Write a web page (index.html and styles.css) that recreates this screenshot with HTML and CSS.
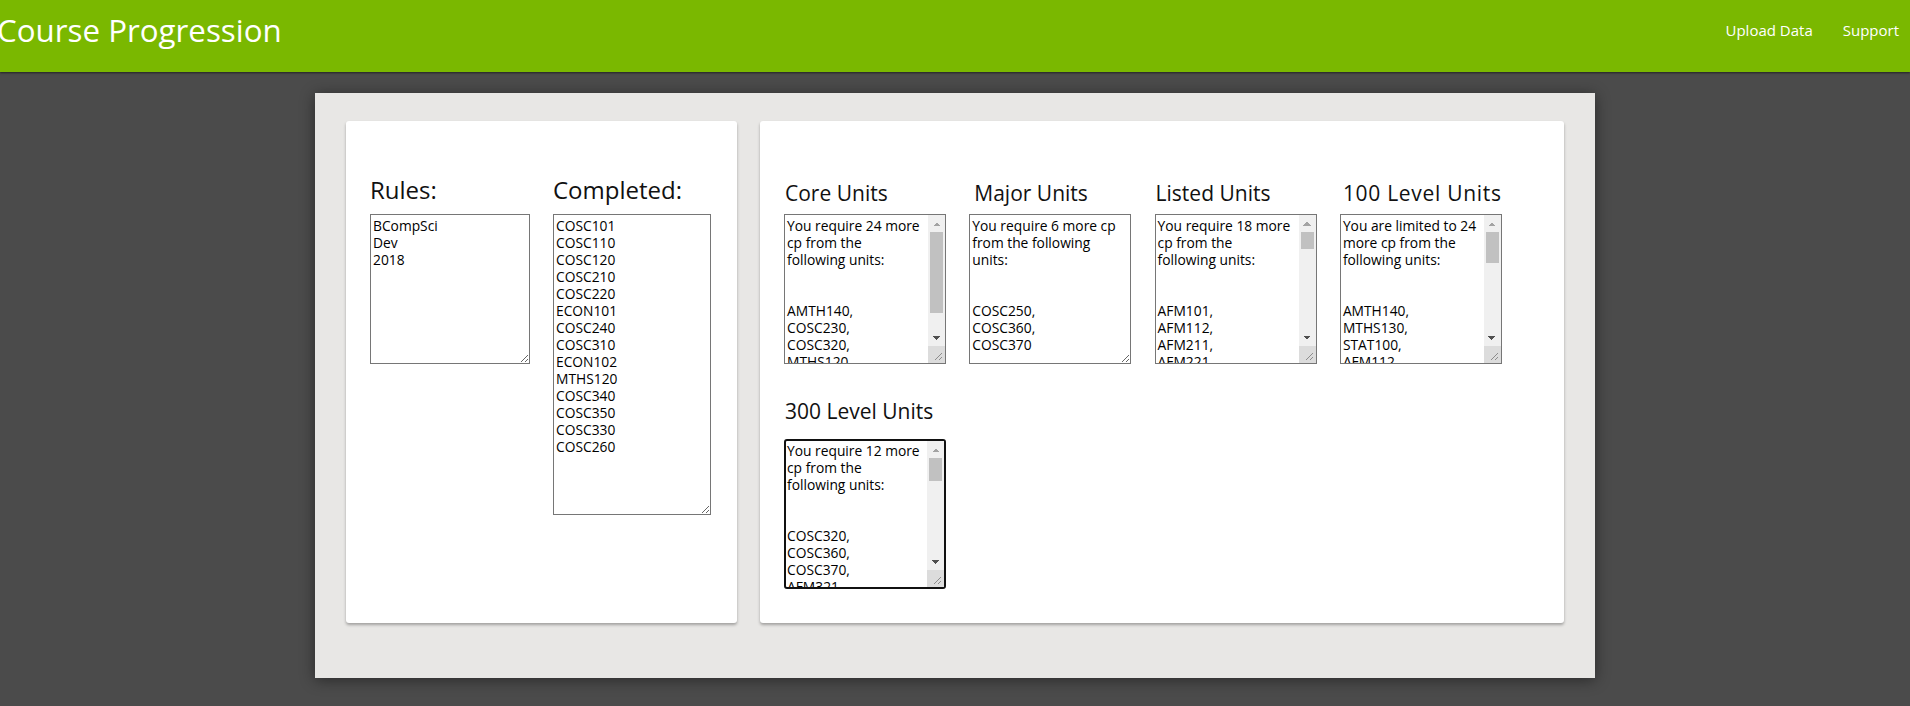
FILE: index.html
```html
<!DOCTYPE html>
<html lang="en">
<head>
<meta charset="utf-8">
<title>Course Progression</title>
<link rel="stylesheet" href="styles.css">
</head>
<body>
<header class="topbar">
  <h1 class="brand">Course Progression</h1>
  <nav class="nav">
    <a class="nav-link" href="#">Upload Data</a>
    <a class="nav-link" href="#">Support</a>
  </nav>
</header>
<main class="sheet">
  <section class="card card--input">
    <div class="field">
      <label class="field-label">Rules:</label>
      <textarea class="box box--rules" spellcheck="false">BCompSci
Dev
2018</textarea>
    </div>
    <div class="field">
      <label class="field-label">Completed:</label>
      <textarea class="box box--completed" spellcheck="false">COSC101
COSC110
COSC120
COSC210
COSC220
ECON101
COSC240
COSC310
ECON102
MTHS120
COSC340
COSC350
COSC330
COSC260</textarea>
    </div>
  </section>
  <section class="card card--units">
    <div class="unit-grid">
      <div class="unit">
        <h2 class="unit-label">Core Units</h2>
        <div class="scrollbox">
          <textarea class="box box--unit box--scroll" spellcheck="false">You require 24 more
cp from the
following units:


AMTH140,
COSC230,
COSC320,
MTHS120,
STAT100</textarea>
          <div class="vbar" aria-hidden="true">
            <span class="vbar-btn vbar-btn--up"></span>
            <span class="vbar-track"><span class="vbar-thumb" style="height:81px"></span></span>
            <span class="vbar-btn vbar-btn--down"></span>
            <span class="vbar-corner"><svg width="17" height="17" viewBox="0 0 17 17"><path d="M14 7 L7 14 M14 11 L11 14" stroke="#8c8c8c" stroke-width="1" fill="none"/></svg></span>
          </div>
        </div>
      </div>
      <div class="unit">
        <h2 class="unit-label unit-label--indent">Major Units</h2>
        <textarea class="box box--unit" spellcheck="false">You require 6 more cp
from the following
units:


COSC250,
COSC360,
COSC370</textarea>
      </div>
      <div class="unit">
        <h2 class="unit-label">Listed Units</h2>
        <div class="scrollbox">
          <textarea class="box box--unit box--scroll" spellcheck="false">You require 18 more
cp from the
following units:


AFM101,
AFM112,
AFM211,
AFM221,
AFM311,
AFM321,
AFM331,
AFM340,
AMTH140,
AMTH246,
AMTH247,
AMTH250,
COSC230,
COSC250,
COSC300,
COSC301,
COSC302,
COSC320,
COSC360,
COSC370,
COSC380,
COSC390,
ECON102,
ECON201,
ECON202,
ECON203,
ECON302,
MTHS130,
MTHS211,
MTHS212,
MTHS213,
MTHS241,
MTHS242,
MTHS311,
MTHS312,
MTHS341,
MTHS342,
STAT100,
STAT200,
STAT210,
STAT330,
STAT354,
STAT355,
STAT389</textarea>
          <div class="vbar" aria-hidden="true">
            <span class="vbar-btn vbar-btn--up"></span>
            <span class="vbar-track"><span class="vbar-thumb" style="height:17px"></span></span>
            <span class="vbar-btn vbar-btn--down"></span>
            <span class="vbar-corner"><svg width="17" height="17" viewBox="0 0 17 17"><path d="M14 7 L7 14 M14 11 L11 14" stroke="#8c8c8c" stroke-width="1" fill="none"/></svg></span>
          </div>
        </div>
      </div>
      <div class="unit">
        <h2 class="unit-label unit-label--wide">100 Level Units</h2>
        <div class="scrollbox">
          <textarea class="box box--unit box--scroll" spellcheck="false">You are limited to 24
more cp from the
following units:


AMTH140,
MTHS130,
STAT100,
AFM112,
AFM101,
COSC101,
COSC110,
COSC120,
ECON101,
ECON102,
MTHS110,
MTHS120,
MM105,
MM110,
MM120,
PSYC101,
PSYC102,
PHIL101,
PHIL102,
LING101,
STAT110,
AMTH142</textarea>
          <div class="vbar" aria-hidden="true">
            <span class="vbar-btn vbar-btn--up"></span>
            <span class="vbar-track"><span class="vbar-thumb" style="height:31px"></span></span>
            <span class="vbar-btn vbar-btn--down"></span>
            <span class="vbar-corner"><svg width="17" height="17" viewBox="0 0 17 17"><path d="M14 7 L7 14 M14 11 L11 14" stroke="#8c8c8c" stroke-width="1" fill="none"/></svg></span>
          </div>
        </div>
      </div>
      <div class="unit unit--spaced">
        <h2 class="unit-label">300 Level Units</h2>
        <div class="scrollbox scrollbox--focused">
          <textarea class="box box--unit box--scroll box--focused" spellcheck="false">You require 12 more
cp from the
following units:


COSC320,
COSC360,
COSC370,
AFM321,
AFM311,
AFM331,
AFM340,
AMTH342,
AMTH350,
COSC300,
COSC301,
COSC302,
COSC310,
COSC330,
COSC340,
COSC350,
COSC380,
COSC390,
ECON302,
ECON307,
ECON331,
MTHS311,
MTHS312,
MTHS341,
MTHS342,
STAT330,
STAT354,
STAT355</textarea>
          <div class="vbar" aria-hidden="true">
            <span class="vbar-btn vbar-btn--up"></span>
            <span class="vbar-track"><span class="vbar-thumb" style="height:23px"></span></span>
            <span class="vbar-btn vbar-btn--down"></span>
            <span class="vbar-corner"><svg width="17" height="17" viewBox="0 0 17 17"><path d="M14 7 L7 14 M14 11 L11 14" stroke="#8c8c8c" stroke-width="1" fill="none"/></svg></span>
          </div>
        </div>
      </div>
    </div>
  </section>
</main>
</body>
</html>
```

FILE: styles.css
```css
* {
  box-sizing: border-box;
}

html,
body {
  margin: 0;
  padding: 0;
}

body {
  background: #4b4b4b;
  font-family: "Open Sans", "Liberation Sans", sans-serif;
  color: #111;
  min-height: 706px;
}

.topbar {
  height: 72px;
  background: #7ab800;
  display: flex;
  justify-content: space-between;
  align-items: flex-start;
  box-shadow: 0 1px 2px rgba(0, 0, 0, 0.55);
  position: relative;
  z-index: 1;
}

.brand {
  margin: 0 0 0 -3px;
  padding-top: 10px;
  font-size: 31.3px;
  line-height: 40px;
  font-weight: 400;
  color: #ffffff;
  white-space: nowrap;
}

.nav {
  display: flex;
  gap: 30px;
  padding: 20px 11px 0 0;
}

.nav-link {
  color: #ffffff;
  text-decoration: none;
  font-size: 15px;
  line-height: 20px;
}

.sheet {
  width: 1280px;
  margin: 21px auto 0;
  background: #e8e7e5;
  padding: 28px 31px 55px;
  display: flex;
  gap: 23px;
  align-items: stretch;
  box-shadow: 0 2px 14px rgba(0, 0, 0, 0.45);
}

.card {
  background: #ffffff;
  border-radius: 3px;
  box-shadow: 0 2px 3px rgba(0, 0, 0, 0.3);
}

.card--input {
  width: 391px;
  flex: none;
  display: flex;
  gap: 23px;
  padding: 53px 24px 0;
  align-items: flex-start;
}

.field {
  display: flex;
  flex-direction: column;
}

.field-label {
  font-size: 24px;
  line-height: 32px;
  margin: 0 0 8px 0;
  color: #111;
}

.box {
  font-family: "Open Sans", "Liberation Sans", sans-serif;
  font-size: 13.8px;
  line-height: 17px;
  color: #000;
  padding: 2px;
  margin: 0;
  border: 1px solid #767676;
  border-radius: 0;
  background: #fff;
  display: block;
  overflow: auto;
}

.box--rules {
  width: 160px;
  height: 150px;
}

.box--completed {
  width: 158px;
  height: 301px;
}

.card--units {
  flex: 1;
  padding: 58px 24px 34px;
}

.unit-grid {
  display: grid;
  grid-template-columns: repeat(4, 162px);
  column-gap: 23.3px;
  row-gap: 33px;
}

.unit-label {
  margin: 0 0 7px 1px;
  font-size: 21px;
  line-height: 28px;
  font-weight: 400;
  color: #111;
  white-space: nowrap;
}

.unit-label--indent {
  margin-left: 5px;
}

.unit-label--wide {
  margin-left: 3px;
  letter-spacing: 0.7px;
}

.unit--spaced .unit-label {
  margin-bottom: 14px;
}

.box--unit {
  width: 162px;
  height: 150px;
}

.scrollbox {
  position: relative;
  width: 162px;
  height: 150px;
}

.box--scroll {
  overflow: hidden;
  padding-right: 19px;
}

.box--focused {
  border: 2px solid #111;
  border-radius: 3px;
  padding: 1px 18px 2px 1px;
  outline: none;
}

.vbar {
  position: absolute;
  top: 1px;
  right: 1px;
  bottom: 1px;
  width: 17px;
  display: flex;
  flex-direction: column;
  background: #f0f0f0;
}

.scrollbox--focused .vbar {
  top: 2px;
  right: 2px;
  bottom: 2px;
}

.vbar-btn {
  flex: none;
  height: 17px;
  background-repeat: no-repeat;
  background-size: 4px 4px, 4px 4px;
  background-position: 4.5px 6.5px, 8.5px 6.5px;
}

.vbar-btn--up {
  background-image:
    linear-gradient(to top left, #a3a3a3 50%, transparent 50%),
    linear-gradient(to top right, #a3a3a3 50%, transparent 50%);
}

.vbar-btn--down {
  background-image:
    linear-gradient(to bottom left, #505050 50%, transparent 50%),
    linear-gradient(to bottom right, #505050 50%, transparent 50%);
}

.vbar-track {
  flex: 1;
  display: block;
}

.vbar-thumb {
  display: block;
  margin: 0 2px;
  background: #c1c1c1;
}

.vbar-corner {
  flex: none;
  height: 17px;
  display: block;
  background: #dcdcdc;
}

.vbar-corner svg {
  display: block;
}
```
